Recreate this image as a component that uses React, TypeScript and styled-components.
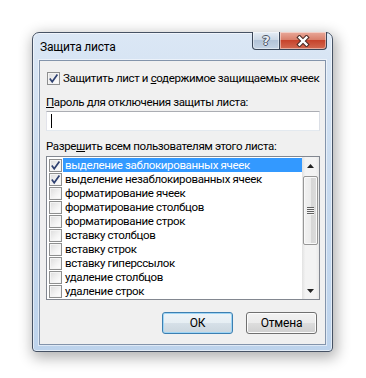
import React from 'react'
import styled, { createGlobalStyle } from 'styled-components'

const Global = createGlobalStyle`
    html, body {
        margin: 0;
        padding: 0;
        background: #fff;
    }
    body {
        font-family: Roboto, "Liberation Sans", Arial, sans-serif;
        font-size: 11.5px;
        letter-spacing: -0.35px;
        color: #000;
    }
`

const Page = styled.div`
    width: 366px;
    height: 378px;
    padding: 32px 0 0 32px;
    box-sizing: border-box;
`

const Window = styled.div`
    width: 301px;
    box-sizing: border-box;
    border: 1px solid #465264;
    border-radius: 7px 7px 4px 4px;
    background: linear-gradient(180deg, #dbe7f5 0%, #c9dbef 45%, #bdd3ec 100%);
    box-shadow: inset 0 0 0 1px rgba(255, 255, 255, 0.55), 2px 4px 14px 2px rgba(0, 0, 0, 0.3);
    padding: 0 6px 6px;
`

const TitleBar = styled.div`
    height: 27px;
    display: flex;
    align-items: flex-start;
`

const Title = styled.div`
    flex: 1;
    margin-top: 7px;
    padding-left: 1px;
    font-size: 12px;
    line-height: 15px;
    letter-spacing: -0.2px;
    color: #000;
`

const CaptionButtons = styled.div`
    display: flex;
    margin-top: -1px;
    margin-right: -1px;
`

const CaptionButton = styled.div<{ $kind: 'help' | 'close' }>`
    height: 18px;
    box-sizing: border-box;
    display: flex;
    align-items: center;
    justify-content: center;
    border: 1px solid #3a4658;
    border-top: none;
    width: ${p => (p.$kind === 'help' ? '28px' : '47px')};
    border-radius: ${p => (p.$kind === 'help' ? '0 0 0 4px' : '0 0 4px 0')};
    border-left: ${p => (p.$kind === 'close' ? 'none' : '1px solid #3a4658')};
    background: ${p =>
        p.$kind === 'help'
            ? 'linear-gradient(180deg, #e6edf5 0%, #ccd8e6 45%, #b2c3d8 50%, #c4d3e4 100%)'
            : 'linear-gradient(180deg, #e9a99a 0%, #d9806c 45%, #c7432c 50%, #d26a52 100%)'};
    box-shadow: inset 0 0 0 1px rgba(255, 255, 255, 0.45);
`

const HelpGlyph = styled.span`
    font-family: "DejaVu Sans", sans-serif;
    font-weight: bold;
    font-size: 13px;
    line-height: 13px;
    letter-spacing: 0;
    color: #e8edf3;
    text-shadow: -1px 0 #4a5566, 1px 0 #4a5566, 0 -1px #4a5566, 0 1px #4a5566;
`

const Client = styled.div`
    background: #f0f0f0;
    border: 1px solid #8394ab;
    box-shadow: 0 0 0 1px rgba(255, 255, 255, 0.5);
    display: flex;
    flex-direction: column;
    padding: 0 5px 10px 6px;
    white-space: nowrap;
`

const CheckRow = styled.label`
    display: flex;
    align-items: center;
    height: 15px;
    line-height: 15px;
    margin: 10px 0 0 1px;
    gap: 3px;
`

const Box = styled.span`
    width: 13px;
    height: 13px;
    box-sizing: border-box;
    flex: none;
    border: 1px solid #8e8f8f;
    background: linear-gradient(135deg, #dcdcdc 0%, #f4f4f4 60%, #ffffff 100%);
    box-shadow: inset 0 0 0 1px #f4f4f4;
    display: flex;
    align-items: center;
    justify-content: center;
`

const Label = styled.div<{ $top: number }>`
    line-height: 15px;
    margin-top: ${p => p.$top}px;
`

const Key = styled.span`
    text-decoration: underline;
`

const Input = styled.div`
    height: 20px;
    box-sizing: border-box;
    margin-top: 1px;
    background: #fff;
    border: 1px solid #abadb3;
    border-left-color: #e2e3ea;
    border-right-color: #dbdfe6;
    border-bottom-color: #e3e9ef;
    padding: 2px 0 0 4px;
`

const Caret = styled.span`
    display: block;
    width: 1px;
    height: 14px;
    background: #000;
`

const List = styled.div`
    margin-top: 2px;
    height: 144px;
    box-sizing: border-box;
    background: #fff;
    border: 1px solid #828790;
    display: flex;
`

const Items = styled.div`
    flex: 1;
    padding-top: 1px;
`

const Item = styled.div`
    height: 14px;
    line-height: 14px;
    display: flex;
    align-items: center;
    padding-left: 2px;
`

const ItemText = styled.span<{ $selected?: boolean }>`
    flex: 1;
    margin-left: 1px;
    padding-left: 2px;
    height: 14px;
    line-height: 14px;
    background: ${p => (p.$selected ? '#3399ff' : 'transparent')};
    color: ${p => (p.$selected ? '#fff' : '#000')};
`

const ScrollBar = styled.div`
    width: 17px;
    flex: none;
    display: flex;
    flex-direction: column;
    background: linear-gradient(90deg, #e2e2e2 0%, #f3f3f3 20%, #f3f3f3 80%, #e8e8e8 100%);
`

const Arrow = styled.div`
    height: 17px;
    flex: none;
    display: flex;
    align-items: center;
    justify-content: center;
`

const Thumb = styled.div`
    margin: 2px 1px 0;
    height: 69px;
    box-sizing: border-box;
    border: 1px solid #979797;
    border-radius: 2px;
    background: linear-gradient(90deg, #f2f2f2 0%, #ebebeb 50%, #d6d6d6 51%, #dcdcdc 100%);
    box-shadow: inset 0 0 0 1px #f9f9f9;
    display: flex;
    flex-direction: column;
    align-items: center;
    justify-content: center;
    gap: 1px;
`

const Grip = styled.span`
    width: 7px;
    height: 1px;
    background: #606060;
    box-shadow: 0 1px #f4f4f4;
`

const Spacer = styled.div`
    flex: 1;
`

const Buttons = styled.div`
    display: flex;
    justify-content: flex-end;
    gap: 13px;
    margin-top: 12px;
    padding-right: 3px;
`

const Button = styled.button<{ $default?: boolean }>`
    width: 71px;
    height: 22px;
    box-sizing: border-box;
    padding: 0;
    font-family: inherit;
    font-size: 12px;
    letter-spacing: -0.2px;
    color: #000;
    border-radius: 3px;
    border: 1px solid ${p => (p.$default ? '#3c7fb1' : '#707070')};
    background: ${p =>
        p.$default
            ? 'linear-gradient(180deg, #eef4f8 0%, #e6eef3 50%, #d6e0e8 51%, #cbd6de 100%)'
            : 'linear-gradient(180deg, #f2f2f2 0%, #ebebeb 50%, #dddddd 51%, #cfcfcf 100%)'};
    box-shadow: inset 0 0 0 1px ${p => (p.$default ? '#9fd5f5' : '#fcfcfc')};
`

const Check = () => (
    <svg width="11" height="11" viewBox="0 0 11 11">
        <path d="M1.8 5.6 L4.2 8.8 L9.4 1.6" fill="none" stroke="#2f4171" strokeWidth="1.7" />
    </svg>
)

const items: { text: string; checked?: boolean; selected?: boolean }[] = [
    { text: 'выделение заблокированных ячеек', checked: true, selected: true },
    { text: 'выделение незаблокированных ячеек', checked: true },
    { text: 'форматирование ячеек' },
    { text: 'форматирование столбцов' },
    { text: 'форматирование строк' },
    { text: 'вставку столбцов' },
    { text: 'вставку строк' },
    { text: 'вставку гиперссылок' },
    { text: 'удаление столбцов' },
    { text: 'удаление строк' },
]

export default () => (
    <Page>
        <Global />
        <Window>
            <TitleBar>
                <Title>Защита листа</Title>
                <CaptionButtons>
                    <CaptionButton $kind="help">
                        <HelpGlyph>?</HelpGlyph>
                    </CaptionButton>
                    <CaptionButton $kind="close">
                        <svg width="16" height="12" viewBox="0 0 16 12">
                            <path
                                d="M4.5 2.5 L11.5 9.5 M11.5 2.5 L4.5 9.5"
                                fill="none"
                                stroke="#4a2a24"
                                strokeWidth="4.4"
                                strokeLinecap="square"
                            />
                            <path
                                d="M4.5 2.5 L11.5 9.5 M11.5 2.5 L4.5 9.5"
                                fill="none"
                                stroke="#fff"
                                strokeWidth="2.4"
                                strokeLinecap="square"
                            />
                        </svg>
                    </CaptionButton>
                </CaptionButtons>
            </TitleBar>
            <Client>
                <CheckRow>
                    <Box>
                        <Check />
                    </Box>
                    <span>
                        Защитить лист и <Key>с</Key>одержимое защищаемых ячеек
                    </span>
                </CheckRow>
                <Label $top={9}>
                    <Key>П</Key>ароль для отключения защиты листа:
                </Label>
                <Input>
                    <Caret />
                </Input>
                <Label $top={8}>
                    Разре<Key>ш</Key>ить всем пользователям этого листа:
                </Label>
                <List>
                    <Items>
                        {items.map(item => (
                            <Item key={item.text}>
                                <Box>{item.checked && <Check />}</Box>
                                <ItemText $selected={item.selected}>{item.text}</ItemText>
                            </Item>
                        ))}
                    </Items>
                    <ScrollBar>
                        <Arrow>
                            <svg width="7" height="4" viewBox="0 0 7 4">
                                <path d="M0 4 L3.5 0 L7 4 Z" fill="#222" />
                            </svg>
                        </Arrow>
                        <Thumb>
                            <Grip />
                            <Grip />
                            <Grip />
                            <Grip />
                        </Thumb>
                        <Spacer />
                        <Arrow>
                            <svg width="7" height="4" viewBox="0 0 7 4">
                                <path d="M0 0 L7 0 L3.5 4 Z" fill="#222" />
                            </svg>
                        </Arrow>
                    </ScrollBar>
                </List>
                <Buttons>
                    <Button $default>ОК</Button>
                    <Button>Отмена</Button>
                </Buttons>
            </Client>
        </Window>
    </Page>
)
